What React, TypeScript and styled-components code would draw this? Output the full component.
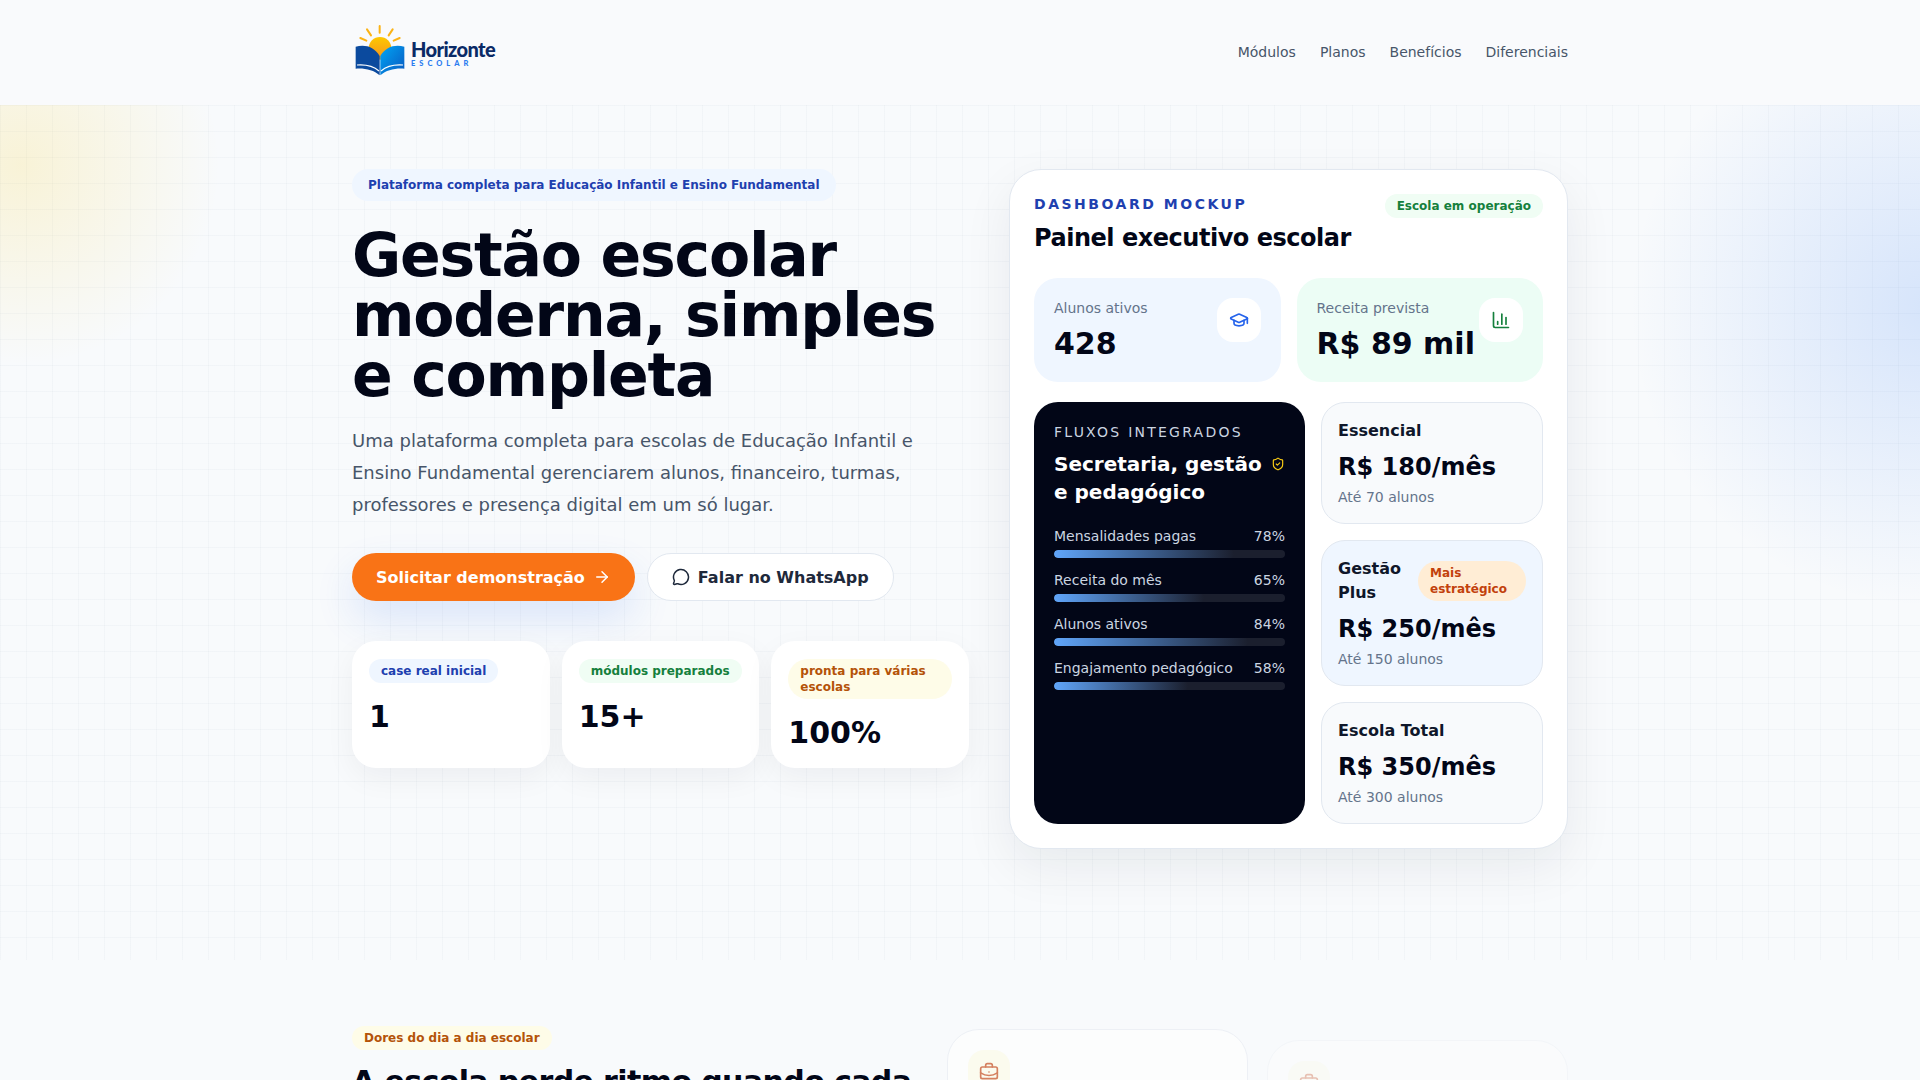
import React from 'react';
import styled, { createGlobalStyle } from 'styled-components';
import { ArrowRight, BarChart3, BriefcaseBusiness, GraduationCap, MessageCircle, ShieldCheck } from 'lucide-react';

const GlobalStyle = createGlobalStyle`
	* {
		box-sizing: border-box;
	}
	html,
	body {
		margin: 0;
		background: #f8fafc;
		font-family: 'DejaVu Sans', sans-serif;
		color: #020617;
	}
`;

const tones: Record<string, { bg: string; fg: string }> = {
	blue: { bg: '#eff6ff', fg: '#1e40af' },
	green: { bg: '#f0fdf4', fg: '#15803d' },
	amber: { bg: '#fefce8', fg: '#b45309' },
	orange: { bg: '#ffedd5', fg: '#c2410c' },
};

const progress = [
	{ label: 'Mensalidades pagas', value: 78 },
	{ label: 'Receita do mês', value: 65 },
	{ label: 'Alunos ativos', value: 84 },
	{ label: 'Engajamento pedagógico', value: 58 },
];

const App: React.FC = () => {
	return (
		<>
			<GlobalStyle />
			<Header>
				<Container>
					<NavBar>
						<LogoBox>
							<Logo />
							<LogoText>
								<LogoName>Horizonte</LogoName>
								<LogoSub>ESCOLAR</LogoSub>
							</LogoText>
						</LogoBox>
						<Nav>
							<NavLink>Módulos</NavLink>
							<NavLink>Planos</NavLink>
							<NavLink>Benefícios</NavLink>
							<NavLink>Diferenciais</NavLink>
						</Nav>
					</NavBar>
				</Container>
			</Header>
			<Hero>
				<Container>
					<HeroGrid>
						<div>
							<HeroBadge>Plataforma completa para Educação Infantil e Ensino Fundamental</HeroBadge>
							<Title>Gestão escolar moderna, simples e completa</Title>
							<Lead>
								Uma plataforma completa para escolas de Educação Infantil e Ensino Fundamental gerenciarem alunos,
								financeiro, turmas, professores e presença digital em um só lugar.
							</Lead>
							<Actions>
								<PrimaryButton>
									Solicitar demonstração
									<ArrowRight size={18} />
								</PrimaryButton>
								<SecondaryButton>
									<MessageCircle size={18} />
									Falar no WhatsApp
								</SecondaryButton>
							</Actions>
							<Metrics>
								<MetricCard>
									<Pill $tone="blue">case real inicial</Pill>
									<MetricValue>1</MetricValue>
								</MetricCard>
								<MetricCard>
									<Pill $tone="green">módulos preparados</Pill>
									<MetricValue>15+</MetricValue>
								</MetricCard>
								<MetricCard>
									<Pill $tone="amber">pronta para várias escolas</Pill>
									<MetricValue>100%</MetricValue>
								</MetricCard>
							</Metrics>
						</div>
						<Dashboard>
							<DashHead>
								<div>
									<Eyebrow>DASHBOARD MOCKUP</Eyebrow>
									<DashTitle>Painel executivo escolar</DashTitle>
								</div>
								<Pill $tone="green">Escola em operação</Pill>
							</DashHead>
							<StatGrid>
								<StatCard $bg="#eff6ff">
									<div>
										<StatLabel>Alunos ativos</StatLabel>
										<StatValue>428</StatValue>
									</div>
									<StatIcon $color="#2563eb">
										<GraduationCap size={20} />
									</StatIcon>
								</StatCard>
								<StatCard $bg="#ecfdf5">
									<div>
										<StatLabel>Receita prevista</StatLabel>
										<StatValue>R$ 89 mil</StatValue>
									</div>
									<StatIcon $color="#15803d">
										<BarChart3 size={20} />
									</StatIcon>
								</StatCard>
							</StatGrid>
							<PanelGrid>
								<FlowCard>
									<FlowEyebrow>FLUXOS INTEGRADOS</FlowEyebrow>
									<FlowHead>
										<FlowTitle>Secretaria, gestão e pedagógico</FlowTitle>
										<ShieldCheck size={14} color="#facc15" />
									</FlowHead>
									<FlowList>
										{progress.map((item) => (
											<div key={item.label}>
												<FlowRow>
													<span>{item.label}</span>
													<span>{item.value}%</span>
												</FlowRow>
												<Track>
													<Fill style={{ width: `${item.value}%` }} />
												</Track>
											</div>
										))}
									</FlowList>
								</FlowCard>
								<PlanList>
									<PlanCard>
										<PlanName>Essencial</PlanName>
										<PlanPrice>R$ 180/mês</PlanPrice>
										<PlanNote>Até 70 alunos</PlanNote>
									</PlanCard>
									<PlanCard $featured>
										<PlanTop>
											<PlanName>Gestão Plus</PlanName>
											<PlanPill $tone="orange">Mais estratégico</PlanPill>
										</PlanTop>
										<PlanPrice>R$ 250/mês</PlanPrice>
										<PlanNote>Até 150 alunos</PlanNote>
									</PlanCard>
									<PlanCard>
										<PlanName>Escola Total</PlanName>
										<PlanPrice>R$ 350/mês</PlanPrice>
										<PlanNote>Até 300 alunos</PlanNote>
									</PlanCard>
								</PlanList>
							</PanelGrid>
						</Dashboard>
					</HeroGrid>
				</Container>
			</Hero>
			<Section>
				<Container>
					<PainGrid>
						<div>
							<Pill $tone="amber">Dores do dia a dia escolar</Pill>
							<SectionTitle>A escola perde ritmo quando cada</SectionTitle>
						</div>
						<PainCards>
							<PainCard>
								<PainIcon>
									<BriefcaseBusiness size={20} />
								</PainIcon>
							</PainCard>
							<PainCard $faded>
								<PainIcon>
									<BriefcaseBusiness size={20} />
								</PainIcon>
							</PainCard>
						</PainCards>
					</PainGrid>
				</Container>
			</Section>
		</>
	);
};

const Logo = () => (
	<svg width="50" height="52" viewBox="30 25 150 156" fill="none">
		<defs>
			<linearGradient id="sun" x1="0" y1="0" x2="0" y2="1">
				<stop offset="0" stopColor="#fdc800" />
				<stop offset="1" stopColor="#f7931e" />
			</linearGradient>
			<linearGradient id="pageRight" x1="0" y1="0" x2="1" y2="1">
				<stop offset="0" stopColor="#00a6f5" />
				<stop offset="1" stopColor="#0a58c0" />
			</linearGradient>
		</defs>
		<g stroke="#fbb316" strokeWidth="6" strokeLinecap="round">
			<path d="M104 31v20" />
			<path d="M66 41l12 18" />
			<path d="M143 41l-12 18" />
			<path d="M46 67l18 8" />
			<path d="M164 67l-18 8" />
		</g>
		<circle cx="105" cy="98" r="34" fill="url(#sun)" />
		<path d="M32 93c26-8 56-1 72 28v58c-18-16-44-22-72-20z" fill="#0b4a9e" />
		<path d="M178 93c-26-8-56-1-72 28v58c18-16 44-22 72-20z" fill="url(#pageRight)" />
		<path d="M36 148c26-2 50 4 66 18" stroke="#fff" strokeWidth="3.5" />
		<path d="M174 148c-26-2-50 4-66 18" stroke="#fff" strokeWidth="3.5" />
	</svg>
);

//스타일 컴포넌트
const Container = styled.div`
	width: 1216px;
	margin: 0 auto;
`;

const Header = styled.header`
	height: 105px;
	background: #f9fafc;
`;

const NavBar = styled.div`
	height: 105px;
	padding-bottom: 2px;
	display: flex;
	align-items: center;
	justify-content: space-between;
`;

const LogoBox = styled.div`
	display: flex;
	align-items: center;
	gap: 6px;
	margin: 0 0 4px 3px;
`;

const LogoText = styled.div`
	display: flex;
	flex-direction: column;
	margin-top: 8px;
`;

const LogoName = styled.span`
	font-family: Lato, sans-serif;
	font-size: 20px;
	font-weight: 900;
	line-height: 20px;
	letter-spacing: -0.6px;
	color: #0b2a66;
`;

const LogoSub = styled.span`
	font-family: Lato, sans-serif;
	font-size: 7.5px;
	font-weight: 900;
	line-height: 10px;
	letter-spacing: 4px;
	color: #2b7cf0;
`;

const Nav = styled.nav`
	display: flex;
	gap: 24px;
`;

const NavLink = styled.a`
	font-size: 14px;
	font-weight: 500;
	color: #475569;
`;

const Hero = styled.section`
	height: 855px;
	padding-top: 64px;
	background:
		radial-gradient(circle at 20px 60px, rgba(250, 204, 21, 0.16), transparent 200px),
		radial-gradient(circle at calc(100% + 10px) 202px, rgba(59, 130, 246, 0.18), transparent 300px),
		linear-gradient(rgba(148, 163, 184, 0.06) 1px, transparent 1px) 0 0 / 26px 26px,
		linear-gradient(90deg, rgba(148, 163, 184, 0.06) 1px, transparent 1px) 0 0 / 26px 26px,
		#f8fafc;
`;

const HeroGrid = styled.div`
	display: grid;
	grid-template-columns: 617px 559px;
	gap: 40px;
	align-items: start;
`;

const HeroBadge = styled.div`
	display: inline-block;
	padding: 8px 16px;
	border-radius: 999px;
	background: #eff6ff;
	color: #1e40af;
	font-size: 12px;
	font-weight: 700;
	line-height: 16px;
`;

const Title = styled.h1`
	margin: 24px 0 0;
	font-size: 60px;
	font-weight: 700;
	line-height: 60px;
	letter-spacing: -0.02em;
	color: #020617;
`;

const Lead = styled.p`
	margin: 20px 0 0;
	max-width: 576px;
	font-size: 18px;
	line-height: 32px;
	color: #475569;
`;

const Actions = styled.div`
	display: flex;
	gap: 12px;
	margin-top: 32px;
`;

const PrimaryButton = styled.button`
	display: flex;
	align-items: center;
	gap: 8px;
	height: 48px;
	padding: 0 24px;
	border: 0;
	border-radius: 999px;
	background: #f97316;
	color: #fff;
	font-family: inherit;
	font-size: 16px;
	font-weight: 700;
	box-shadow: 0 18px 40px rgba(37, 99, 235, 0.14);
`;

const SecondaryButton = styled.button`
	display: flex;
	align-items: center;
	gap: 8px;
	height: 48px;
	padding: 0 24px;
	border: 1px solid #e2e8f0;
	border-radius: 999px;
	background: #fff;
	color: #1e293b;
	font-family: inherit;
	font-size: 16px;
	font-weight: 700;
`;

const Metrics = styled.div`
	display: grid;
	grid-template-columns: repeat(3, 1fr);
	gap: 12px;
	margin-top: 40px;
`;

const MetricCard = styled.div`
	height: 127px;
	padding: 18px 17px;
	border-radius: 24px;
	background: #fff;
	box-shadow: 0 10px 30px rgba(15, 23, 42, 0.05);
`;

const Pill = styled.span<{ $tone: string }>`
	display: inline-block;
	padding: 4px 12px;
	border-radius: 999px;
	background: ${(p) => tones[p.$tone].bg};
	color: ${(p) => tones[p.$tone].fg};
	font-size: 12px;
	font-weight: 700;
	line-height: 16px;
`;

const PlanPill = styled(Pill)`
	flex: 0 0 108px;
`;

const MetricValue = styled.div`
	margin-top: 16px;
	font-size: 30px;
	font-weight: 700;
	line-height: 36px;
`;

const Dashboard = styled.div`
	padding: 24px;
	border: 1px solid #e2e8f0;
	border-radius: 32px;
	background: #fff;
	box-shadow: 0 18px 50px rgba(15, 23, 42, 0.07);
`;

const DashHead = styled.div`
	display: flex;
	align-items: flex-start;
	justify-content: space-between;
`;

const Eyebrow = styled.div`
	font-size: 14px;
	font-weight: 700;
	line-height: 20px;
	letter-spacing: 0.18em;
	color: #1e40af;
`;

const DashTitle = styled.h2`
	margin: 8px 0 0;
	font-size: 24px;
	font-weight: 700;
	line-height: 32px;
	letter-spacing: -0.02em;
`;

const StatGrid = styled.div`
	display: grid;
	grid-template-columns: 1fr 1fr;
	gap: 16px;
	margin-top: 24px;
`;

const StatCard = styled.div<{ $bg: string }>`
	display: flex;
	align-items: flex-start;
	justify-content: space-between;
	padding: 20px;
	border-radius: 24px;
	background: ${(p) => p.$bg};
`;

const StatLabel = styled.div`
	font-size: 14px;
	line-height: 20px;
	color: #64748b;
`;

const StatValue = styled.div`
	margin-top: 8px;
	font-size: 30px;
	font-weight: 700;
	line-height: 36px;
	white-space: nowrap;
`;

const StatIcon = styled.div<{ $color: string }>`
	display: flex;
	align-items: center;
	justify-content: center;
	flex: none;
	width: 44px;
	height: 44px;
	border-radius: 16px;
	background: #fff;
	color: ${(p) => p.$color};
`;

const PanelGrid = styled.div`
	display: grid;
	grid-template-columns: 271px 222px;
	gap: 16px;
	margin-top: 20px;
`;

const FlowCard = styled.div`
	padding: 20px;
	border-radius: 24px;
	background: #020617;
	color: #fff;
`;

const FlowEyebrow = styled.div`
	font-size: 14px;
	line-height: 20px;
	letter-spacing: 0.16em;
	color: #cbd5e1;
`;

const FlowHead = styled.div`
	display: flex;
	align-items: flex-start;
	justify-content: space-between;
	gap: 8px;
	margin-top: 8px;

	svg {
		flex: none;
		margin-top: 7px;
	}
`;

const FlowTitle = styled.div`
	font-size: 20px;
	font-weight: 700;
	line-height: 28px;
`;

const FlowList = styled.div`
	display: flex;
	flex-direction: column;
	gap: 12px;
	margin-top: 20px;
`;

const FlowRow = styled.div`
	display: flex;
	justify-content: space-between;
	margin-bottom: 4px;
	font-size: 14px;
	line-height: 20px;
	color: #cbd5e1;
`;

const Track = styled.div`
	height: 8px;
	border-radius: 999px;
	background: rgba(255, 255, 255, 0.1);
	overflow: hidden;
`;

const Fill = styled.div`
	height: 100%;
	border-radius: 999px;
	background: linear-gradient(90deg, #60a5fa, transparent);
`;

const PlanList = styled.div`
	display: flex;
	flex-direction: column;
	gap: 16px;
`;

const PlanCard = styled.div<{ $featured?: boolean }>`
	padding: 16px;
	border: 1px solid #e2e8f0;
	border-radius: 24px;
	background: ${(p) => (p.$featured ? '#eff6ff' : '#f8fafc')};
`;

const PlanTop = styled.div`
	display: flex;
	align-items: center;
	justify-content: space-between;
	gap: 12px;
`;

const PlanName = styled.div`
	font-size: 16px;
	font-weight: 700;
	line-height: 24px;
	color: #0f172a;
`;

const PlanPrice = styled.div`
	margin-top: 8px;
	font-size: 24px;
	font-weight: 700;
	line-height: 32px;
`;

const PlanNote = styled.div`
	margin-top: 4px;
	font-size: 14px;
	line-height: 20px;
	color: #64748b;
`;

const Section = styled.section`
	padding: 66px 0 120px;
	background: #f8fafc;
`;

const PainGrid = styled.div`
	display: grid;
	grid-template-columns: 1fr 621px;
	gap: 35px;
`;

const SectionTitle = styled.h2`
	margin: 14px 0 0;
	font-size: 30px;
	font-weight: 700;
	line-height: 36px;
	letter-spacing: -0.02em;
`;

const PainCards = styled.div`
	display: grid;
	grid-template-columns: 301px 301px;
	gap: 19px;
	align-items: start;
`;

const PainCard = styled.div<{ $faded?: boolean }>`
	height: 240px;
	margin-top: ${(p) => (p.$faded ? '14px' : '3px')};
	padding: 20px;
	border: 1px solid #e8ecf2;
	border-radius: 32px;
	background: #fff;
	opacity: ${(p) => (p.$faded ? 0.3 : 0.65)};
`;

const PainIcon = styled.div`
	display: flex;
	align-items: center;
	justify-content: center;
	width: 42px;
	height: 44px;
	border-radius: 16px;
	background: #fefce8;
	color: #c2410c;
`;

export default App;
